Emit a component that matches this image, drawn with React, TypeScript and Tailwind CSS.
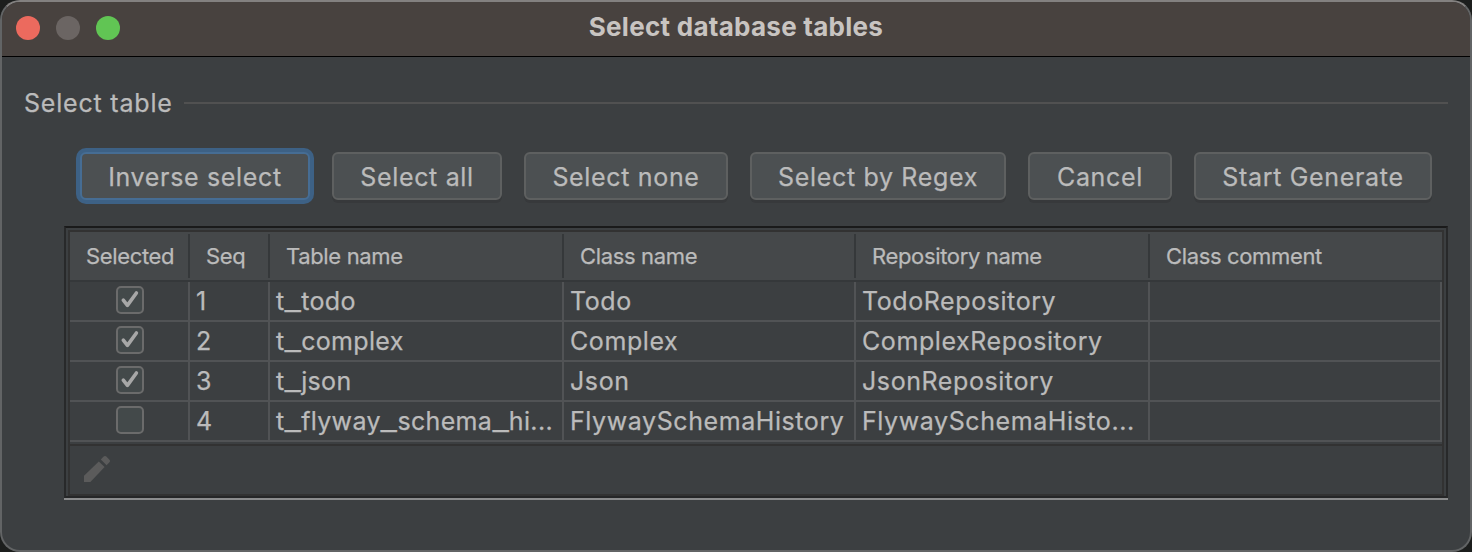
import React from "react";

type Row = {
  selected: boolean;
  seq: string;
  table: string;
  cls: string;
  repo: string;
  comment: string;
};

const rows: Row[] = [
  { selected: true, seq: "1", table: "t_todo", cls: "Todo", repo: "TodoRepository", comment: "" },
  { selected: true, seq: "2", table: "t_complex", cls: "Complex", repo: "ComplexRepository", comment: "" },
  { selected: true, seq: "3", table: "t_json", cls: "Json", repo: "JsonRepository", comment: "" },
  { selected: false, seq: "4", table: "t_flyway_schema_hi...", cls: "FlywaySchemaHistory", repo: "FlywaySchemaHisto...", comment: "" },
];

const headers = ["Selected", "Seq", "Table name", "Class name", "Repository name", "Class comment"];

const buttons = [
  { label: "Inverse select", width: "w-[230px]", focused: true },
  { label: "Select all", width: "w-[170px]", focused: false },
  { label: "Select none", width: "w-[204px]", focused: false },
  { label: "Select by Regex", width: "w-[256px]", focused: false },
  { label: "Cancel", width: "w-[144px]", focused: false },
  { label: "Start Generate", width: "w-[238px]", focused: false },
];

const columns = "grid grid-cols-[120px_80px_294px_292px_294px_292px]";

function Checkbox({ checked }: { checked: boolean }) {
  return (
    <span className="flex h-7 w-7 items-center justify-center rounded-[5px] border-2 border-[#6b6b6b] bg-[#43494a]">
      {checked && (
        <svg width="24" height="24" viewBox="0 0 24 24" fill="none" className="shrink-0">
          <path d="M5.3 12.2L9.4 17.4L18.4 5" stroke="#a7a7a7" strokeWidth="3.6" strokeLinecap="round" strokeLinejoin="round" />
        </svg>
      )}
    </span>
  );
}

function Cell({ children }: { children?: React.ReactNode }) {
  return (
    <div className="flex items-center border-r-2 border-b-2 border-[#515355] pl-1.5 whitespace-nowrap">
      {children}
    </div>
  );
}

// Table identifiers are drawn with wide underscores.
function Identifier({ name }: { name: string }) {
  return (
    <span className="tracking-[0.34px]">
      {name.split(/(_)/).map((part, i) =>
        part === "_" ? (
          <span key={i} className="mx-[2.6px] inline-block scale-x-[1.44] tracking-normal">
            _
          </span>
        ) : (
          part
        ),
      )}
    </span>
  );
}

export default function App() {
  return (
    <div className="h-[552px] w-[1472px] overflow-hidden bg-[#1c1e1d] font-['Inter',sans-serif] text-[25px] leading-[30px] tracking-[0.58px] text-[#bbbbbb] [-webkit-text-stroke:0.25px]">
      <div className="flex h-full flex-col overflow-hidden rounded-[20px] border-2 border-[#626465] border-t-[#838180] bg-[#3c3f41]">
        <header className="grid h-[55px] shrink-0 grid-cols-[1fr_auto_1fr] items-center border-b border-black bg-[#48423f] pb-0.5">
          <div className="flex gap-4 pl-3.5">
            <span className="h-6 w-6 rounded-full bg-[#ec6a5e]" />
            <span className="h-6 w-6 rounded-full bg-[#6b6563]" />
            <span className="h-6 w-6 rounded-full bg-[#61c554]" />
          </div>
          <h1 className="pb-0.5 text-[26px] font-bold tracking-[0.27px] text-[#c8c4c1] [-webkit-text-stroke:0]">Select database tables</h1>
          <div />
        </header>

        <main className="pl-[22px] pr-[22px] pt-[31px]">
          <div className="flex h-[30px] items-center gap-3">
            <h2 className="w-[148px] whitespace-nowrap tracking-[0.8px]">Select table</h2>
            <div className="h-0.5 flex-1 bg-[#515151]" />
          </div>

          <div className="mt-[34px] flex gap-[22px] pl-14">
            {buttons.map((b) => (
              <button
                key={b.label}
                className={`flex h-12 items-center justify-center whitespace-nowrap rounded-[6px] border-2 bg-[#4c5052] pt-0.5 tracking-[0.67px] ${b.width} ${
                  b.focused
                    ? "border-[#466d94] shadow-[0_0_0_4px_#3d6185]"
                    : "border-[#5e6060] shadow-[0_3px_0_0_#37393b]"
                }`}
              >
                {b.label}
              </button>
            ))}
          </div>

          <div className="mt-[26px] ml-10 h-[274px] border-b-2 border-[#8b8c8d]">
            <div className="h-[272px] border-2 border-[#28292a] border-t-[#1a1a1a] border-b-[#252627]">
              <div className="h-[268px] border-x-2 border-t-2 border-[#3c3f41]">
                <div className="h-[266px] border-2 border-[#323232]">
                  <div className={`${columns} h-[50px] border-b-2 border-[#35383a] bg-[#45484a] text-[22px] tracking-[-0.35px]`}>
                    {headers.map((label, i) => (
                      <div key={label} className="flex py-0.5">
                        <div className={`flex flex-1 items-center whitespace-nowrap pl-4 ${i < 5 ? "border-r-2 border-[#35383a]" : ""}`}>
                          {label}
                        </div>
                      </div>
                    ))}
                  </div>
                  {rows.map((r) => (
                    <div key={r.seq} className={`${columns} h-10`}>
                      <div className="flex items-start justify-center border-r-2 border-b-2 border-[#515355] pt-1 pl-0.5">
                        <Checkbox checked={r.selected} />
                      </div>
                      <Cell>{r.seq}</Cell>
                      <Cell>
                        <Identifier name={r.table} />
                      </Cell>
                      <Cell>{r.cls}</Cell>
                      <Cell>{r.repo}</Cell>
                      <Cell>{r.comment}</Cell>
                    </div>
                  ))}
                  <div className="mt-0.5 flex h-[50px] items-start border-t-2 border-[#323232] pt-2.5 pl-3.5">
                    <svg width="26" height="26" viewBox="0 0 26 26" fill="#5b5b5b">
                      <path d="M0 19.8L14.8 5.4L20.6 11L6.4 26H0Z" />
                      <path d="M16.8 3.4L19.4 0.8Q21 -0.6 22.6 0.8L25.2 3.4Q26.8 5 25.2 6.6L22.6 9.2Z" />
                    </svg>
                  </div>
                </div>
              </div>
            </div>
          </div>
        </main>
      </div>
    </div>
  );
}
